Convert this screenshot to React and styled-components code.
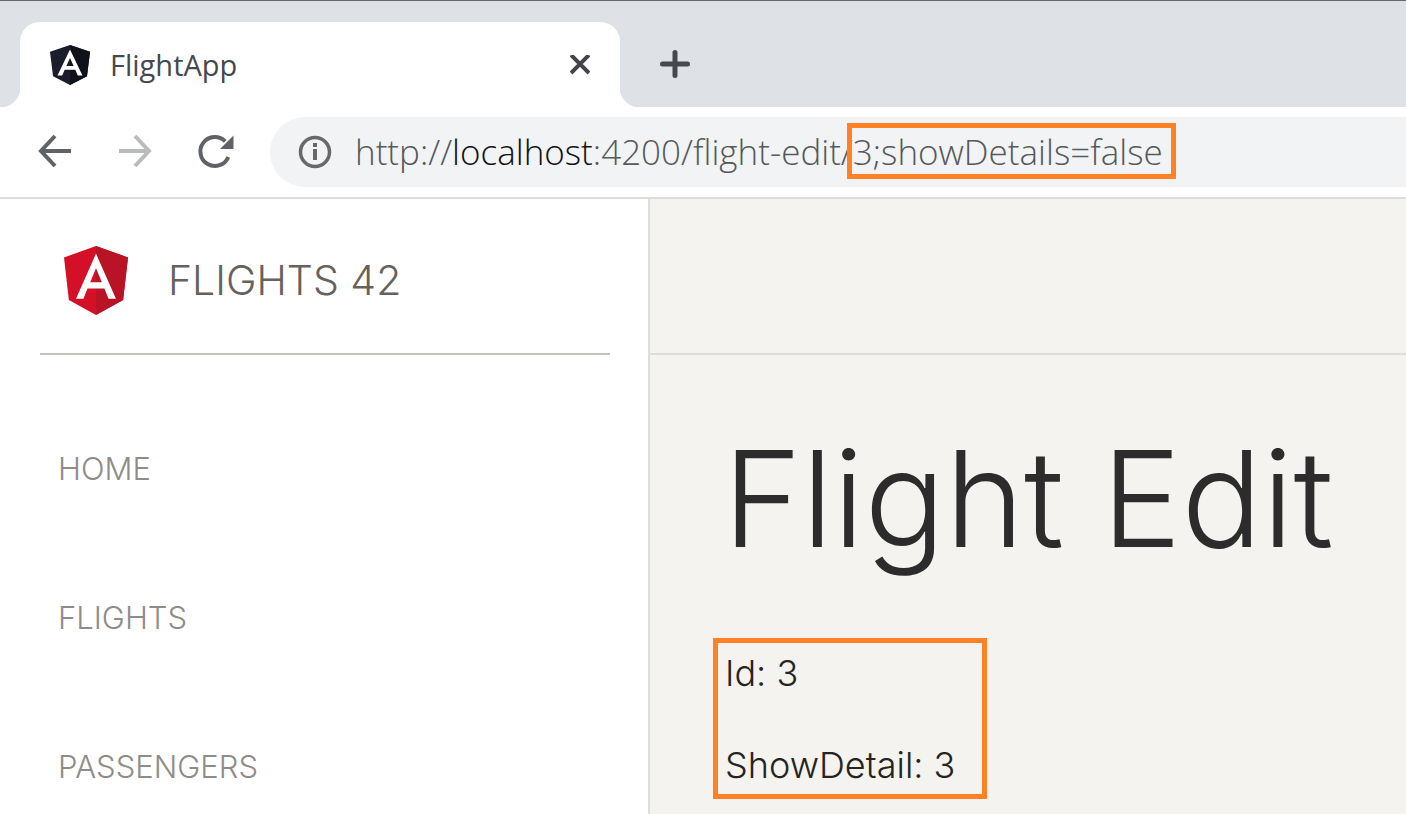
import React from "react";
import styled, { createGlobalStyle } from "styled-components";

const GlobalStyle = createGlobalStyle`
  * { box-sizing: border-box; }
  html, body { margin: 0; background: #f4f3ef; }
  body { font-family: Inter, "Liberation Sans", sans-serif; overflow: hidden; }
  button { border: 0; padding: 0; background: none; cursor: pointer; }
`;

const ORANGE = "#ff8126";

const Page = styled.div`
  min-height: 100vh;
  display: flex;
  flex-direction: column;
`;

const TabStrip = styled.header`
  height: 107px;
  padding: 21px 0 0 20px;
  display: flex;
  align-items: stretch;
  background: #dee1e6;
  border-top: 1px solid #65676b;
`;

const Tab = styled.div`
  position: relative;
  width: 600px;
  padding: 0 30px;
  display: flex;
  align-items: center;
  gap: 20px;
  background: #fff;
  border-radius: 20px 20px 0 0;
  &::before,
  &::after {
    content: "";
    position: absolute;
    bottom: 0;
    width: 20px;
    height: 20px;
  }
  &::before {
    right: 100%;
    background: radial-gradient(circle at 0 0, transparent 20px, #fff 21px);
  }
  &::after {
    left: 100%;
    background: radial-gradient(circle at 100% 0, transparent 20px, #fff 21px);
  }
`;

const TabTitle = styled.span`
  flex: 1;
  font: 400 29px/40px "Open Sans", sans-serif;
  color: #45484d;
`;

const IconButton = styled.button`
  flex: none;
  display: flex;
  align-items: center;
  justify-content: center;
  width: ${(p) => p.$size}px;
  height: ${(p) => p.$size}px;
  color: ${(p) => p.$color || "#5f6368"};
`;

const NewTab = styled(IconButton)`
  align-self: center;
  margin-left: 35px;
`;

const Toolbar = styled.div`
  height: 92px;
  padding: 10px 0 10px 35px;
  display: flex;
  align-items: center;
  gap: 40px;
  background: #fff;
  border-bottom: 2px solid #dadce0;
`;

const AddressBar = styled.div`
  flex: 1;
  min-width: 0;
  height: 70px;
  margin-left: -5px;
  padding-left: 25px;
  display: flex;
  align-items: center;
  gap: 20px;
  background: #f1f3f4;
  border-radius: 35px 0 0 35px;
`;

const Address = styled.div`
  flex: 1;
  white-space: nowrap;
  outline: none;
  font: 300 35px/48px "Open Sans", sans-serif;
  color: #56585b;
`;

const Host = styled.span`
  color: #101114;
`;

const Marked = styled.span`
  position: relative;
  &::after {
    content: "";
    position: absolute;
    inset: -5px -13px -4px -6px;
    border: 5px solid ${ORANGE};
    pointer-events: none;
  }
`;

const Body = styled.div`
  flex: 1;
  display: flex;
`;

const Sidebar = styled.aside`
  flex: none;
  width: 650px;
  padding: 0 38px 0 40px;
  background: #fff;
  border-right: 2px solid #dddddd;
`;

const Brand = styled.a`
  height: 156px;
  padding: 8px 24px 0;
  display: flex;
  align-items: center;
  gap: 40px;
  border-bottom: 2px solid #c4c3bd;
  font-size: 41px;
  font-weight: 300;
  color: #66615b;
  text-decoration: none;
`;

const Nav = styled.nav`
  padding: 39px 18px 0;
  display: flex;
  flex-direction: column;
`;

const NavLink = styled.a`
  font-size: 31px;
  font-weight: 300;
  line-height: 149px;
  color: #8f8c88;
  text-decoration: none;
`;

const Main = styled.main`
  flex: 1;
  min-width: 0;
  background: #f4f3ef;
`;

const MainHeader = styled.div`
  height: 156px;
  border-bottom: 2px solid #dddddd;
`;

const Content = styled.section`
  padding: 63px 0 0 63px;
`;

const Title = styled.h1`
  margin: 0 0 60px;
  padding-left: 10px;
  white-space: nowrap;
  font-size: 134px;
  font-weight: 300;
  line-height: 160px;
  color: #2c2c2c;
`;

const Details = styled.div`
  width: 274px;
  height: 161px;
  padding: 6px 7px;
  display: flex;
  flex-direction: column;
  gap: 44px;
  border: 5px solid ${ORANGE};
`;

const Detail = styled.p`
  margin: 0;
  white-space: nowrap;
  font-size: 36px;
  font-weight: 300;
  line-height: 48px;
  color: #252422;
`;

function AngularLogo({ width, height, left, right }) {
  return (
    <svg width={width} height={height} viewBox="31.9 30 186.2 200" preserveAspectRatio="none" aria-hidden="true">
      <path fill={left} d="M125 30 31.9 63.2l14.2 123.1L125 230l78.9-43.7 14.2-123.1z" />
      <path fill={right} d="M125 30v200l78.9-43.7 14.2-123.1z" />
      <path
        fill="#fff"
        d="M125 52.1 66.8 182.6h21.7l11.7-29.2h49.4l11.7 29.2H183L125 52.1zm17 83.3h-34l17-40.9z"
      />
    </svg>
  );
}

function Stroke({ size, d, width = 4 }) {
  return (
    <svg width={size} height={size} viewBox={`0 0 ${size} ${size}`} fill="none" stroke="currentColor" strokeWidth={width} aria-hidden="true">
      <path d={d} />
    </svg>
  );
}

const links = ["HOME", "FLIGHTS", "PASSENGERS"];

export default function App() {
  return (
    <Page>
      <GlobalStyle />
      <TabStrip>
        <Tab>
          <AngularLogo width={40} height={40} left="#1b1d2b" right="#10121a" />
          <TabTitle>FlightApp</TabTitle>
          <IconButton $size={20} $color="#414549" aria-label="Close tab">
            <Stroke size={20} d="M1 0l18 18M19 0L1 18" />
          </IconButton>
        </Tab>
        <NewTab $size={40} $color="#45494d" aria-label="New tab">
          <svg width="30" height="30" viewBox="0 0 30 30" stroke="currentColor" strokeWidth="5" strokeLinecap="round" aria-hidden="true">
            <path d="M15 2.5v23M2.5 14h25" />
          </svg>
        </NewTab>
      </TabStrip>
      <Toolbar>
        <IconButton $size={40} aria-label="Back">
          <Stroke size={40} d="M36 19H6M20 4L6 19 20 34" />
        </IconButton>
        <IconButton $size={40} $color="#b9bbbd" aria-label="Forward">
          <Stroke size={40} d="M4 19h30M20 4l14 15L20 34" />
        </IconButton>
        <IconButton $size={40} aria-label="Reload">
          <svg width="40" height="40" viewBox="0 0 40 40" fill="none" aria-hidden="true">
            <path d="M33.300 25A14.500 14.500 0 1 1 30.200 9.300" stroke="currentColor" strokeWidth="4" />
            <path d="M38.500 3.500V17H25z" fill="currentColor" />
          </svg>
        </IconButton>
        <AddressBar>
          <IconButton $size={40} $color="#66686b" aria-label="Site information">
            <svg width="34" height="34" viewBox="0 0 34 34" fill="none" stroke="currentColor" aria-hidden="true">
              <circle cx="17" cy="17" r="14.500" strokeWidth="3.500" />
              <path d="M17 8v4M17 14v11" strokeWidth="4" />
            </svg>
          </IconButton>
          <Address role="textbox" aria-label="Address" contentEditable suppressContentEditableWarning spellCheck={false}>
            http://<Host>localhost</Host>:4200/flight-edit/<Marked>3;showDetails=false</Marked>
          </Address>
        </AddressBar>
      </Toolbar>
      <Body>
        <Sidebar>
          <Brand href="#">
            <AngularLogo width={64} height={69} left="#d31027" right="#b81426" />
            FLIGHTS 42
          </Brand>
          <Nav>
            {links.map((label) => (
              <NavLink key={label} href="#">{label}</NavLink>
            ))}
          </Nav>
        </Sidebar>
        <Main>
          <MainHeader />
          <Content>
            <Title>Flight Edit</Title>
            <Details>
              <Detail>Id: 3</Detail>
              <Detail>ShowDetail: 3</Detail>
            </Details>
          </Content>
        </Main>
      </Body>
    </Page>
  );
}
